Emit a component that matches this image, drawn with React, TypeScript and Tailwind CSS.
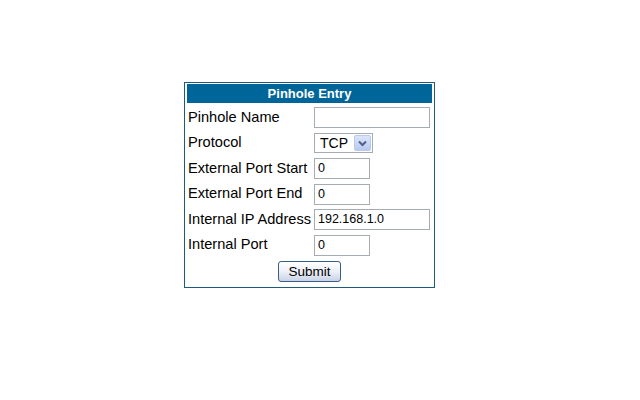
import React from 'react'

const rows: { label: string; kind: 'text' | 'select'; value?: string; wide?: boolean }[] = [
  { label: 'Pinhole Name', kind: 'text', value: '', wide: true },
  { label: 'Protocol', kind: 'select', value: 'TCP' },
  { label: 'External Port Start', kind: 'text', value: '0' },
  { label: 'External Port End', kind: 'text', value: '0' },
  { label: 'Internal IP Address', kind: 'text', value: '192.168.1.0', wide: true },
  { label: 'Internal Port', kind: 'text', value: '0' },
]

function Field({ kind, value, wide }: { kind: 'text' | 'select'; value?: string; wide?: boolean }) {
  if (kind === 'select') {
    return (
      <div className="flex items-center h-[20px] w-[59px] border border-[#a5acb2] bg-white pl-[5px] pr-[1px]">
        <span className="flex-1 text-[14px] leading-none text-black">{value}</span>
        <span className="flex items-center justify-center w-[17px] h-[16px] rounded-[2px] border border-[#b9c9ef] bg-gradient-to-b from-[#dbe5fb] to-[#b7c9f1]">
          <svg width="9" height="7" viewBox="0 0 9 7">
            <path d="M1 1.5 L4.5 5 L8 1.5" fill="none" stroke="#4d6185" strokeWidth="2" />
          </svg>
        </span>
      </div>
    )
  }
  return (
    <div
      className={`flex items-center h-[21px] border border-[#a5acb2] bg-white pl-[3px] text-[12.5px] text-black ${
        wide ? 'w-[116px]' : 'w-[56px]'
      }`}
    >
      {value}
    </div>
  )
}

export default function App() {
  return (
    <div className="w-[640px] h-[400px] bg-white font-['Liberation_Sans',Arial,sans-serif] pt-[82px] pl-[184px]">
      <div className="w-[251px] border border-[#1d5b78] p-[1px] pb-[5px]">
        <div className="h-[19px] bg-[#006699] text-white text-[13px] font-bold flex items-center justify-center mx-[1px]">
          Pinhole Entry
        </div>
        <div className="pt-[2px]">
          {rows.map((r) => (
            <div key={r.label} className="flex items-center h-[25.5px]">
              <div className="w-[128px] pl-[2px] text-[14.6px] text-black whitespace-nowrap">{r.label}</div>
              <Field kind={r.kind} value={r.value} wide={r.wide} />
            </div>
          ))}
        </div>
        <div className="flex justify-center pt-[3px]">
          <button className="w-[63px] h-[21px] rounded-[3px] border border-[#3b5d86] bg-gradient-to-b from-white via-[#ecf0f7] to-[#c9d3e6] text-[13.5px] text-black leading-none">
            Submit
          </button>
        </div>
      </div>
    </div>
  )
}
